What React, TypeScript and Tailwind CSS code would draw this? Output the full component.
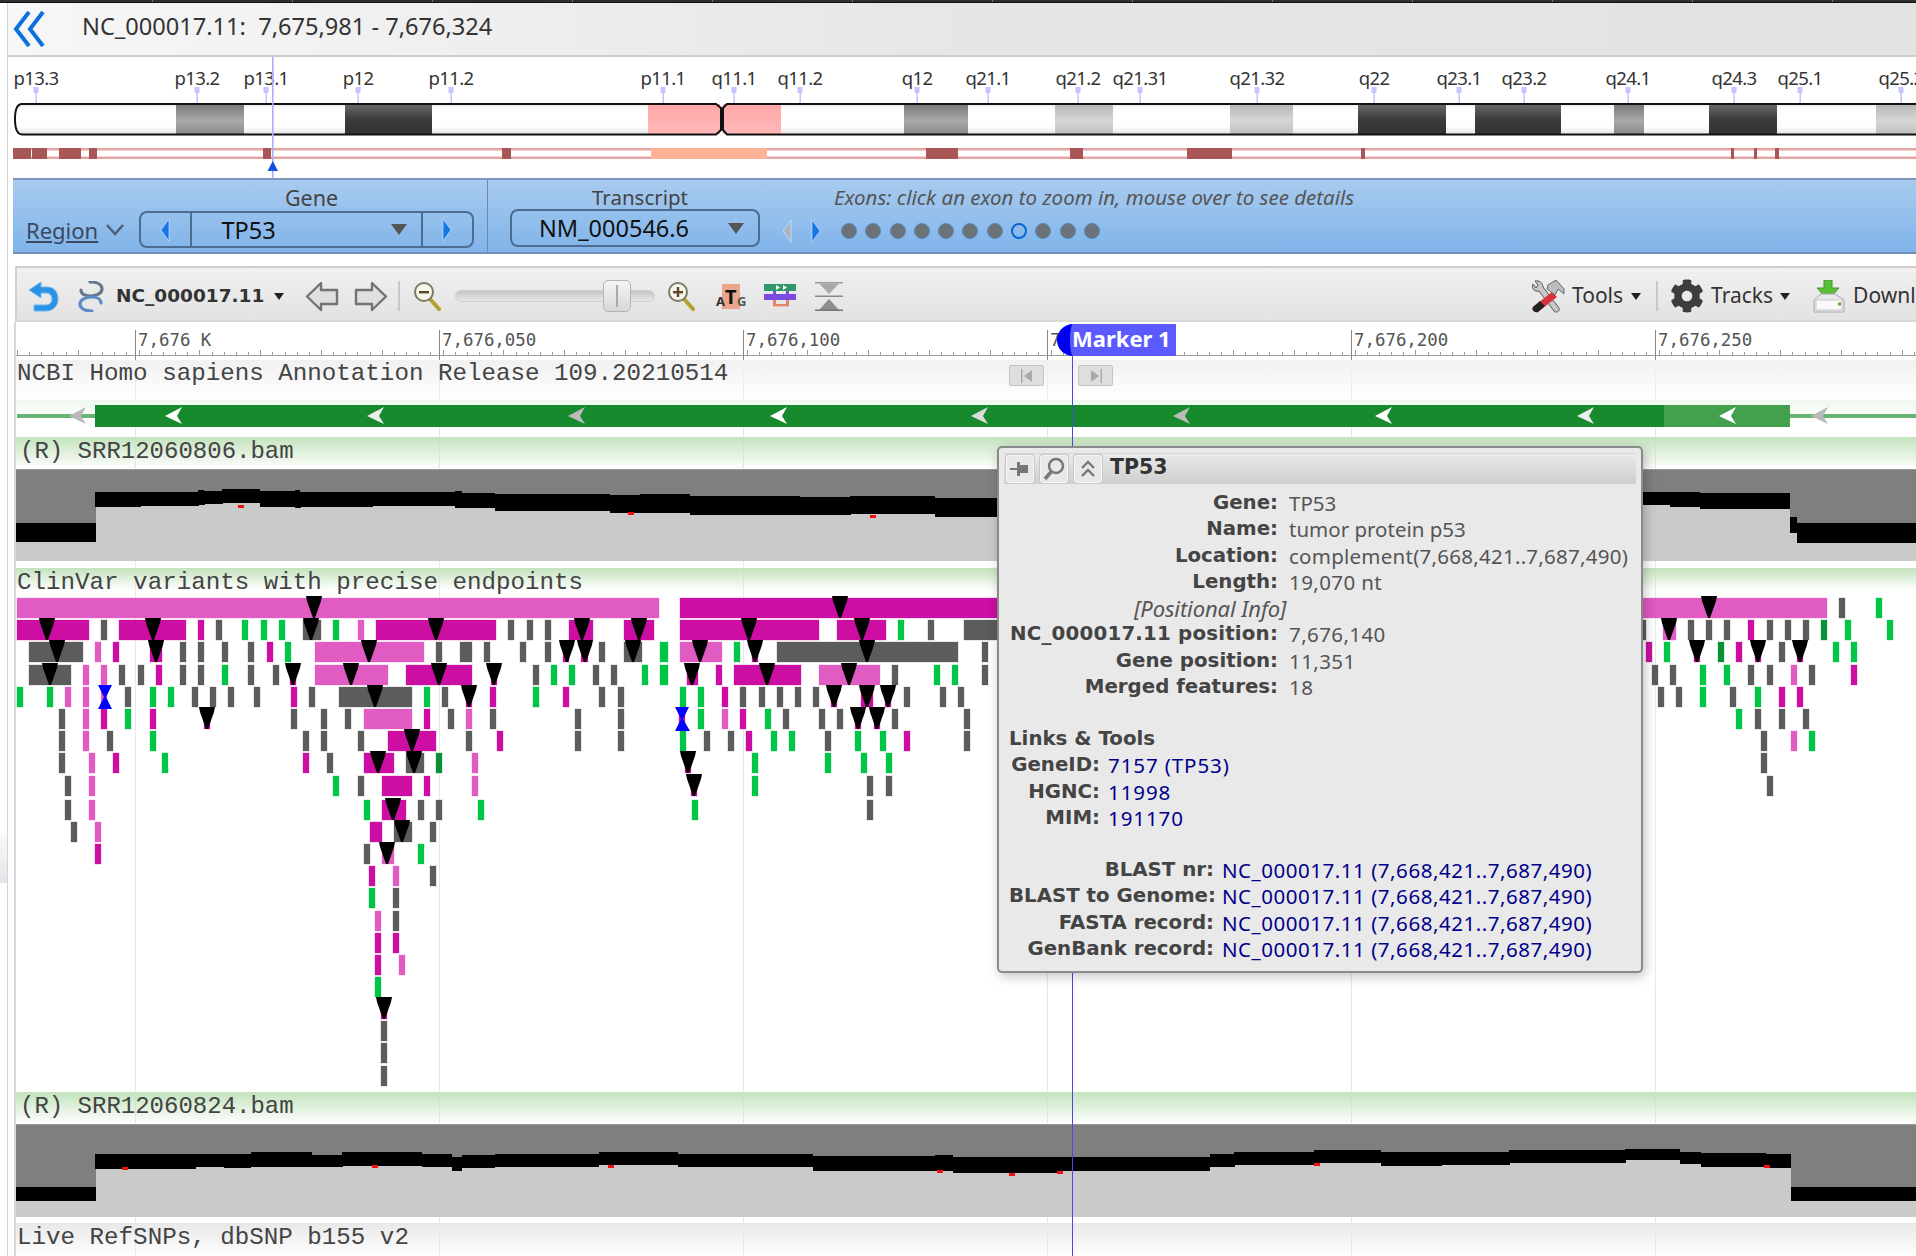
import React from "react";
import { FaCog } from "react-icons/fa";

const ROWS = [598, 620, 642, 665, 687, 709, 731, 753, 776, 800, 822, 844, 866, 888, 911, 933, 955, 977, 999, 1021, 1043, 1066];
const COL: Record<string, string> = { m: "#cc0ea3", p: "#e05cc2", g: "#5c5c5c", n: "#00c547", d: "#0a9138" };

type B = [string, number, number];
const BARS: B[][] = [
  [["p", 17, 659], ["m", 680, 1000], ["p", 1642, 1827], ["g", 1839, 1845], ["n", 1876, 1882]],
  [["m", 17, 89], ["g", 101, 107], ["m", 119, 186], ["m", 198, 204], ["g", 216, 222], ["n", 242, 248], ["n", 261, 267], ["n", 279, 285], ["g", 303, 321], ["n", 333, 339], ["p", 358, 364], ["m", 376, 496], ["g", 508, 514], ["g", 527, 533], ["g", 545, 551], ["m", 569, 593], ["m", 624, 654], ["m", 680, 819], ["m", 837, 886], ["n", 898, 904], ["g", 928, 934], ["g", 964, 1000], ["g", 1642, 1646], ["p", 1663, 1676], ["g", 1688, 1694], ["g", 1706, 1712], ["g", 1724, 1730], ["m", 1748, 1754], ["g", 1767, 1773], ["g", 1785, 1791], ["g", 1803, 1809], ["d", 1821, 1827], ["n", 1845, 1851], ["n", 1887, 1893]],
  [["g", 29, 83], ["p", 95, 101], ["m", 113, 119], ["m", 150, 162], ["g", 180, 186], ["g", 198, 204], ["g", 222, 228], ["g", 248, 254], ["m", 267, 273], ["n", 285, 291], ["p", 315, 424], ["g", 436, 442], ["g", 460, 472], ["g", 484, 490], ["g", 520, 526], ["g", 545, 551], ["m", 563, 569], ["m", 581, 588], ["g", 599, 605], ["g", 624, 642], ["n", 660, 668], ["p", 680, 722], ["n", 734, 740], ["m", 752, 758], ["g", 777, 958], ["g", 982, 988], ["m", 1646, 1652], ["n", 1664, 1670], ["d", 1718, 1724], ["m", 1736, 1742], ["g", 1779, 1785], ["n", 1833, 1839], ["n", 1851, 1857], ["m", 1694, 1700], ["m", 1755, 1761], ["m", 1797, 1803]],
  [["g", 29, 71], ["p", 83, 89], ["p", 101, 107], ["g", 119, 125], ["g", 138, 144], ["m", 156, 162], ["g", 180, 186], ["g", 198, 204], ["n", 222, 228], ["g", 248, 254], ["g", 273, 279], ["m", 290, 296], ["p", 315, 388], ["m", 406, 472], ["m", 491, 497], ["g", 533, 539], ["n", 551, 557], ["n", 569, 575], ["g", 593, 599], ["g", 611, 617], ["n", 642, 648], ["n", 660, 668], ["m", 687, 698], ["m", 716, 722], ["m", 734, 801], ["p", 819, 880], ["g", 892, 898], ["n", 934, 940], ["n", 952, 958], ["g", 982, 988], ["g", 1652, 1658], ["g", 1670, 1676], ["n", 1700, 1706], ["n", 1724, 1730], ["g", 1748, 1754], ["g", 1767, 1773], ["p", 1791, 1797], ["g", 1809, 1815], ["m", 1851, 1857]],
  [["n", 17, 23], ["n", 47, 53], ["p", 65, 71], ["p", 83, 89], ["p", 101, 107], ["g", 125, 131], ["n", 150, 156], ["n", 168, 174], ["g", 192, 198], ["g", 210, 216], ["g", 228, 234], ["g", 254, 260], ["m", 291, 297], ["g", 309, 315], ["g", 339, 412], ["n", 424, 430], ["g", 442, 448], ["m", 466, 472], ["m", 490, 496], ["n", 533, 539], ["m", 563, 569], ["g", 599, 605], ["g", 618, 624], ["n", 680, 686], ["n", 698, 704], ["m", 722, 728], ["g", 740, 746], ["g", 759, 765], ["g", 777, 783], ["g", 795, 801], ["g", 813, 819], ["m", 831, 837], ["m", 861, 873], ["m", 885, 891], ["g", 904, 910], ["g", 940, 946], ["g", 958, 964], ["g", 1658, 1664], ["g", 1676, 1682], ["n", 1700, 1706], ["g", 1730, 1736], ["n", 1755, 1761], ["m", 1779, 1785], ["m", 1797, 1803]],
  [["g", 59, 65], ["p", 83, 89], ["m", 101, 107], ["n", 125, 131], ["m", 150, 156], ["m", 204, 210], ["g", 291, 297], ["g", 321, 327], ["g", 345, 351], ["p", 364, 412], ["m", 424, 430], ["g", 448, 454], ["p", 466, 472], ["g", 490, 496], ["g", 575, 581], ["g", 618, 624], ["m", 679, 685], ["n", 698, 704], ["p", 722, 728], ["m", 740, 746], ["n", 765, 771], ["g", 783, 789], ["g", 819, 825], ["g", 837, 843], ["m", 855, 861], ["m", 874, 880], ["g", 892, 898], ["g", 964, 970], ["n", 1736, 1742], ["g", 1755, 1761], ["g", 1779, 1785], ["g", 1803, 1809]],
  [["g", 59, 65], ["p", 83, 89], ["g", 107, 113], ["n", 150, 156], ["g", 303, 309], ["g", 321, 327], ["g", 358, 364], ["m", 388, 436], ["g", 466, 472], ["m", 497, 503], ["g", 575, 581], ["g", 618, 624], ["n", 680, 686], ["g", 704, 710], ["g", 728, 734], ["m", 746, 752], ["n", 771, 777], ["n", 789, 795], ["g", 825, 831], ["n", 855, 861], ["n", 880, 886], ["m", 904, 910], ["g", 964, 970], ["g", 1761, 1767], ["p", 1791, 1797], ["n", 1809, 1815]],
  [["g", 59, 65], ["p", 89, 95], ["m", 113, 119], ["n", 162, 168], ["m", 303, 309], ["g", 327, 333], ["m", 364, 394], ["g", 406, 424], ["d", 436, 442], ["p", 472, 478], ["m", 685, 691], ["n", 752, 758], ["n", 825, 831], ["n", 861, 867], ["n", 886, 892], ["g", 1761, 1767]],
  [["g", 65, 71], ["p", 89, 95], ["n", 333, 339], ["g", 358, 364], ["m", 382, 412], ["m", 424, 430], ["p", 472, 478], ["m", 691, 697], ["n", 752, 758], ["g", 867, 873], ["g", 886, 892], ["g", 1767, 1773]],
  [["g", 65, 71], ["p", 89, 95], ["n", 364, 370], ["m", 382, 406], ["g", 418, 424], ["g", 436, 442], ["n", 478, 484], ["n", 692, 698], ["g", 867, 873]],
  [["g", 71, 77], ["p", 95, 101], ["m", 370, 382], ["g", 394, 412], ["g", 430, 436]],
  [["m", 95, 101], ["g", 364, 370], ["p", 382, 394], ["n", 418, 424]],
  [["m", 369, 375], ["p", 393, 399], ["g", 430, 436]],
  [["n", 369, 375], ["g", 393, 399]],
  [["p", 375, 381], ["g", 393, 399]],
  [["m", 375, 381], ["m", 393, 399]],
  [["m", 375, 381], ["p", 399, 405]],
  [["n", 375, 381]],
  [["m", 381, 387]],
  [["g", 381, 387]],
  [["g", 381, 387]],
  [["g", 381, 387]],
];
const TRI: [number, number][] = [
  [0, 314], [0, 840], [0, 1709],
  [1, 47], [1, 153], [1, 311], [1, 436], [1, 582], [1, 639], [1, 749], [1, 862], [1, 1669],
  [2, 57], [2, 156], [2, 369], [2, 567], [2, 585], [2, 633], [2, 700], [2, 755], [2, 867], [2, 1697], [2, 1758], [2, 1800],
  [3, 50], [3, 293], [3, 351], [3, 439], [3, 494], [3, 692], [3, 767], [3, 849],
  [4, 375], [4, 469], [4, 834], [4, 867], [4, 888],
  [5, 207], [5, 858], [5, 877],
  [6, 412],
  [7, 378], [7, 414], [7, 688],
  [8, 694],
  [9, 393],
  [10, 402],
  [11, 387],
  [18, 384],
];

const IDEO_LABELS: [string, number][] = [["p13.3", 36], ["p13.2", 197], ["p13.1", 266], ["p12", 358], ["p11.2", 451], ["p11.1", 663], ["q11.1", 734], ["q11.2", 800], ["q12", 917], ["q21.1", 988], ["q21.2", 1078], ["q21.31", 1140], ["q21.32", 1257], ["q22", 1374], ["q23.1", 1459], ["q23.2", 1524], ["q24.1", 1628], ["q24.3", 1734], ["q25.1", 1800], ["q25.2", 1901]];
const BANDS: [number, number, string][] = [[176, 244, "med"], [345, 432, "dark"], [648, 720, "pink"], [723, 781, "pink"], [904, 968, "med"], [1055, 1113, "light"], [1230, 1293, "light"], [1358, 1446, "dark"], [1475, 1561, "dark"], [1614, 1644, "med"], [1709, 1777, "dark"], [1876, 1916, "light"]];
const CYTO: [number, number][] = [[13, 31], [32, 47], [59, 81], [89, 97], [263, 271], [502, 511], [926, 958], [1070, 1083], [1187, 1232], [1361, 1365], [1731, 1734], [1754, 1757], [1775, 1779]];
const MAJORS: [number, string][] = [[135, "7,676 K"], [439, "7,676,050"], [743, "7,676,100"], [1047, "7,676,150"], [1351, "7,676,200"], [1655, "7,676,250"]];
const GENE_ARROWS: [number, string][] = [[78, "#b9b9b9"], [174, "#fff"], [376, "#eee"], [577, "#bbb"], [779, "#fff"], [980, "#ddd"], [1182, "#bbb"], [1384, "#fff"], [1586, "#eee"], [1728, "#fff"], [1820, "#b9b9b9"]];

type Seg = [number, number, number, number];
const COV1: Seg[] = [[16, 95, 523, 542], [95, 140, 492, 507], [140, 198, 492, 506], [198, 204, 490, 505], [204, 222, 491, 504], [222, 260, 489, 503], [260, 295, 491, 507], [295, 300, 490, 508], [300, 372, 492, 507], [372, 455, 492, 506], [455, 462, 491, 508], [462, 495, 493, 508], [495, 560, 494, 511], [560, 610, 494, 511], [610, 640, 495, 513], [640, 690, 494, 513], [690, 800, 496, 515], [800, 850, 497, 515], [850, 935, 496, 514], [935, 1000, 498, 517], [1000, 1642, 496, 515], [1642, 1670, 492, 505], [1670, 1700, 492, 507], [1700, 1790, 493, 509], [1790, 1797, 517, 533], [1797, 1916, 523, 543]];
const RAW2: [number, number, number, number][] = [[13, 78, 380, 423], [78, 160, 283, 328], [160, 183, 283, 322], [183, 205, 283, 325], [205, 255, 277, 320], [255, 280, 285, 320], [280, 345, 277, 318], [345, 370, 283, 322], [370, 378, 290, 333], [378, 405, 285, 325], [405, 490, 283, 320], [490, 555, 277, 316], [555, 630, 283, 322], [630, 665, 283, 322], [665, 765, 289, 332], [765, 780, 285, 332], [780, 865, 292, 340], [865, 990, 290, 332], [990, 1010, 283, 322], [1010, 1075, 277, 314], [1075, 1130, 270, 310], [1130, 1180, 277, 318], [1180, 1235, 277, 316], [1235, 1330, 271, 308], [1330, 1375, 268, 301], [1375, 1392, 277, 312], [1392, 1445, 279, 320], [1445, 1466, 283, 325], [1466, 1568, 380, 423]];
const COV2: Seg[] = RAW2.map(([a, b, t, u]) => [a * 1.222, b * 1.222, 1060 + t / 3, 1060 + u / 3] as Seg);
const RED1: [number, number][] = [[238, 505], [628, 512], [870, 515], [1000, 0]];
const RED2: [number, number][] = [[122, 1167], [372, 1165], [608, 1165], [937, 1170], [1009, 1173], [1057, 1171], [1314, 1163], [1764, 1165]];

const sans = "font-['Noto_Sans','Liberation_Sans',sans-serif]";
const mono = "font-['Liberation_Mono',monospace]";
const boldFace = "font-['DejaVu_Sans',sans-serif] font-bold";

function Coverage({ segs, top, h, reds }: { segs: Seg[]; top: number; h: number; reds: [number, number][] }) {
  return (
    <svg className="block w-[1900px]" height={h} viewBox={`16 ${top} 1900 ${h}`} shapeRendering="crispEdges">
      <rect x="16" y={top} width="1900" height={h} fill="#cacaca" />
      {segs.map(([a, b, t, u], i) => (
        <g key={i}>
          <rect x={a} y={top} width={b - a + 0.5} height={t - top} fill="#7f7f7f" />
          <rect x={a} y={t} width={b - a + 0.5} height={u - t} fill="#000" />
        </g>
      ))}
      <rect x="16" y={top} width="1900" height="1" fill="#9a9a9a" />
      {reds.filter((r) => r[1] > 0).map(([x, y], i) => <rect key={i} x={x} y={y} width="6" height="2.5" fill="#f01010" />)}
    </svg>
  );
}

function GeneArrow({ x, c }: { x: number; c: string }) {
  return <polygon points={`${x - 9},416 ${x + 8},407 ${x + 3},416 ${x + 8},424`} fill={c} />;
}

function Ideogram() {
  return (
    <svg className="block" width="1908" height="121" viewBox="8 57 1908 121">
      <defs>
        <linearGradient id="w" x1="0" y1="0" x2="0" y2="1"><stop offset="0" stopColor="#eee" /><stop offset="0.2" stopColor="#fff" /><stop offset="0.75" stopColor="#fff" /><stop offset="1" stopColor="#e4e4e4" /></linearGradient>
        <linearGradient id="med" x1="0" y1="0" x2="0" y2="1"><stop offset="0" stopColor="#777" /><stop offset="0.55" stopColor="#a9a9a9" /><stop offset="1" stopColor="#8a8a8a" /></linearGradient>
        <linearGradient id="dark" x1="0" y1="0" x2="0" y2="1"><stop offset="0" stopColor="#6a6a6a" /><stop offset="0.5" stopColor="#3c3c3c" /><stop offset="1" stopColor="#333" /></linearGradient>
        <linearGradient id="light" x1="0" y1="0" x2="0" y2="1"><stop offset="0" stopColor="#b4b4b4" /><stop offset="0.55" stopColor="#d6d6d6" /><stop offset="1" stopColor="#c0c0c0" /></linearGradient>
        <linearGradient id="pink" x1="0" y1="0" x2="0" y2="1"><stop offset="0" stopColor="#ffa6a6" /><stop offset="1" stopColor="#ffb8b8" /></linearGradient>
      </defs>
      {IDEO_LABELS.map(([t, x]) => (
        <g key={t}>
          <rect x={x - 2.5} y="87" width="5" height="6" fill="#c4c4ff" />
          <rect x={x - 0.5} y="93" width="1.5" height="10" fill="#c4c4ff" />
          <text x={x} y="85" textAnchor="middle" fontFamily="Noto Sans" fontSize="18.5" letterSpacing="-0.6" fill="#333">{t}</text>
        </g>
      ))}
      <path d="M 22 104 H 716 Q 720 104 720 108 V 130 Q 720 134 716 134 H 22 Q 15 134 15 119 Q 15 104 22 104 Z" fill="url(#w)" />
      <path d="M 727 104 H 1920 V 134 H 727 Q 723 134 723 119 Q 723 104 727 104 Z" fill="url(#w)" />
      {BANDS.map(([a, b, k], i) => <rect key={i} x={a} y="104" width={b - a} height="30" fill={`url(#${k})`} />)}
      <path d="M 22 104 H 716 L 721 108 V 130 L 716 134.5 H 22 Q 15 134 15 119 Q 15 104 22 104 Z" fill="none" stroke="#111" strokeWidth="2" />
      <path d="M 1920 104 H 727 L 723 108 V 130 L 727 134.5 H 1920" fill="none" stroke="#111" strokeWidth="2" />
      <rect x="13" y="148" width="1903" height="11" fill="#e5a5a5" />
      <rect x="13" y="150.5" width="1903" height="6" fill="#fff" />
      <rect x="651" y="148" width="116" height="11" fill="#ffb295" />
      {CYTO.map(([a, b], i) => <rect key={i} x={a} y="148" width={b - a} height="11" fill="#a95656" />)}
      <rect x="272" y="57" width="1.6" height="121" fill="#aeaeff" />
      <polygon points="272.8,161 278,171 267.5,171" fill="#1450e0" />
    </svg>
  );
}

function Tri({ d, c = "#1577e6" }: { d: "l" | "r"; c?: string }) {
  return (
    <svg width="10" height="24" viewBox="0 0 10 24">
      <polygon points={d === "l" ? "9,1 9,23 1,12" : "1,1 1,23 9,12"} fill={c} stroke="#d8ecff" strokeWidth="0.6" />
    </svg>
  );
}

function Caret({ w = 16, h = 11, c = "#555" }: { w?: number; h?: number; c?: string }) {
  return <svg width={w} height={h} viewBox="0 0 16 11"><polygon points="0,0 16,0 8,11" fill={c} /></svg>;
}

function Undo() {
  return (
    <svg width="31" height="31" viewBox="0 0 31 31">
      <path d="M1 9 L13 1 V6 H19 C27 6 30 12 30 18 C30 25 25 30 18 30 H6 V24 H18 C22 24 24 21 24 18 C24 15 22 12 18 12 H13 V17 Z" fill="#2a93e6" stroke="#6fb7ee" strokeWidth="1" />
    </svg>
  );
}
function LinkIcon() {
  return (
    <svg width="28" height="31" viewBox="0 0 28 31" fill="none" strokeLinecap="round">
      <path d="M13 1 C21 1 25 4 25 8 C25 13 18 15 13 15 C8 15 4 13 4 9" stroke="#66788e" strokeWidth="3.2" />
      <path d="M15 30 C7 30 3 27 3 23 C3 18 10 16 15 16 C20 16 24 18 24 22" stroke="#5c8cc6" strokeWidth="3.2" />
    </svg>
  );
}
function BigArrow({ d }: { d: "l" | "r" }) {
  return (
    <svg width="34" height="31" viewBox="0 0 34 31" className={d === "r" ? "-scale-x-100" : ""}>
      <polygon points="2,15.5 16,2 16,9 32,9 32,23 16,23 16,29" fill="#dfdfdf" stroke="#737373" strokeWidth="2.4" strokeLinejoin="round" />
    </svg>
  );
}
function Mag({ plus }: { plus?: boolean }) {
  return (
    <svg width="28" height="30" viewBox="0 0 28 30" fill="none">
      <line x1="17" y1="18" x2="26" y2="28" stroke="#b3a22d" strokeWidth="4" strokeLinecap="round" />
      <circle cx="11" cy="11" r="9" fill="#f6f6ea" stroke="#7c7c66" strokeWidth="2" />
      <rect x="6" y="10" width="10" height="2.4" fill="#5c4a2a" />
      {plus && <rect x="9.8" y="6" width="2.4" height="10" fill="#5c4a2a" />}
    </svg>
  );
}
function Atg() {
  return (
    <svg width="32" height="25" viewBox="0 0 32 25" className="mt-[1px]">
      <rect x="7" y="0" width="18" height="25" fill="#e9a68b" />
      <text x="1" y="22" fontFamily="Noto Sans" fontSize="13" fontWeight="700" fill="#333">A</text>
      <text x="10" y="20" fontFamily="Noto Sans" fontSize="20" fontWeight="700" fill="#111">T</text>
      <text x="22" y="22" fontFamily="Noto Sans" fontSize="13" fontWeight="700" fill="#555">G</text>
    </svg>
  );
}
function Rows() {
  return (
    <svg width="32" height="25" viewBox="0 0 32 25">
      <rect x="0" y="0" width="32" height="7" fill="#2e9a6a" />
      <polygon points="12,1 16,3.5 12,6" fill="#fff" />
      <polygon points="19,1 23,3.5 19,6" fill="#fff" />
      <rect x="0" y="10" width="32" height="6" fill="#7a4ce0" />
      <rect x="9" y="7" width="3" height="3" fill="#7a4ce0" />
      <rect x="22" y="7" width="3" height="3" fill="#7a4ce0" />
      <rect x="9" y="16" width="3" height="6" fill="#e8836b" />
      <rect x="22" y="16" width="3" height="6" fill="#e8836b" />
      <rect x="9" y="20" width="16" height="2.4" fill="#e8836b" />
    </svg>
  );
}
function Collapse() {
  return (
    <svg width="28" height="29" viewBox="0 0 28 29">
      <rect x="0" y="0" width="28" height="1.5" fill="#9a9a9a" />
      <polygon points="4,1.5 24,1.5 14,12" fill="#a8a8a8" />
      <rect x="0" y="13.5" width="28" height="1.5" fill="#8a8a8a" />
      <polygon points="14,17 24,28 4,28" fill="#8d8d8d" />
      <rect x="0" y="27.5" width="28" height="1.5" fill="#777" />
    </svg>
  );
}
function Hammer() {
  return (
    <svg width="35" height="33" viewBox="0 0 35 33">
      <path d="M3 4 C1 9 5 12 9 11 L24 31 C26 33 30 32 29 28 L13 7 C13 3 9 0 5 1 L8 5 L6 8 Z" fill="#c8c8c8" stroke="#555" strokeWidth="1" />
      <path d="M22 12 L27 17 L8 32 C5 33 1 30 3 27 Z" fill="#d8333a" />
      <path d="M8 32 C5 33 1 30 3 27 L10 21 L15 26 Z" fill="#222" />
      <path d="M18 5 L26 0 L34 9 L34 14 L28 9 L25 15 L17 9 Z" fill="#bdbdbd" stroke="#666" strokeWidth="1" />
    </svg>
  );
}
function Download() {
  return (
    <svg width="32" height="33" viewBox="0 0 32 33">
      <polygon points="11,0 19,0 19,8 26,8 15,20 4,8 11,8" fill="#5bbf3a" stroke="#3c9a25" strokeWidth="1" />
      <polygon points="1,20 8,14 22,14 31,20 31,32 1,32" fill="#e9e9e9" stroke="#a8a8a8" strokeWidth="1" />
      <rect x="3" y="20" width="26" height="10" fill="#fafafa" stroke="#bcbcbc" strokeWidth="0.8" />
      <rect x="25" y="22.5" width="3" height="3" fill="#4faf2d" />
    </svg>
  );
}
function PopBtn({ children }: { children: React.ReactNode }) {
  return <div className="w-[28px] h-[28px] rounded-[3px] bg-[#e8e8e8] border border-[#f6f6f6] shadow-[0_0_0_1px_#c8c8c8] flex items-center justify-center">{children}</div>;
}
function TrackBtn({ d }: { d: "l" | "r" }) {
  return (
    <div className="w-[35px] h-[21px] rounded-[2px] bg-[#dedede] border border-[#c4c4c4] flex items-center justify-center">
      <svg width="16" height="14" viewBox="0 0 16 14">
        {d === "l" ? <><rect x="2" y="0" width="1.5" height="14" fill="#aaa" /><polygon points="13,1 13,13 5,7" fill="#aaa" /></> : <><rect x="12.5" y="0" width="1.5" height="14" fill="#aaa" /><polygon points="3,1 3,13 11,7" fill="#aaa" /></>}
      </svg>
    </div>
  );
}

const TABLE1: [string, string, string][] = [["Gene:", "TP53", ""], ["Name:", "tumor protein p53", ""], ["Location:", "complement(7,668,421..7,687,490)", "tracking-[0.25px]"], ["Length:", "19,070 nt", "tracking-[0.4px]"]];
const TABLE1B: [string, string][] = [["NC_000017.11 position:", "7,676,140"], ["Gene position:", "11,351"], ["Merged features:", "18"]];
const TABLE2: [string, string][] = [["GeneID:", "7157 (TP53)"], ["HGNC:", "11998"], ["MIM:", "191170"]];
const TABLE3 = ["BLAST nr:", "BLAST to Genome:", "FASTA record:", "GenBank record:"];
const label = `text-right ${boldFace} text-[19.8px] text-[#444] whitespace-nowrap`;

function Popup() {
  return (
    <div className={`absolute left-[997px] top-[446px] w-[646px] h-[527px] z-30 bg-[#e9e9e9] border-2 border-[#8a8a8a] rounded-[5px] shadow-[2px_3px_12px_rgba(0,0,0,0.25)] p-[5px] ${sans} text-[20.5px] leading-[26.25px] text-[#555]`}>
      <div className="h-[31px] flex items-center gap-[6px] pl-[2px] bg-gradient-to-b from-[#e9e9e9] to-[#cfcfcf] border-t border-[#d5d5d5]">
        <PopBtn>
          <svg width="20" height="16" viewBox="0 0 20 16"><rect x="0" y="7" width="8" height="2" fill="#777" /><rect x="7" y="1" width="3" height="14" fill="#777" /><rect x="9" y="4" width="9" height="8" fill="#777" /></svg>
        </PopBtn>
        <PopBtn>
          <svg width="22" height="24" viewBox="0 0 22 24" fill="none"><circle cx="13" cy="9" r="7" stroke="#777" strokeWidth="2.5" /><line x1="8" y1="15" x2="2" y2="22" stroke="#777" strokeWidth="3.5" /></svg>
        </PopBtn>
        <PopBtn>
          <svg width="16" height="20" viewBox="0 0 16 20" fill="none" stroke="#777" strokeWidth="2.4"><polyline points="2,9 8,3 14,9" /><polyline points="2,17 8,11 14,17" /></svg>
        </PopBtn>
        <span className={`ml-[2px] pb-[3px] ${boldFace} text-[#333] text-[20.5px]`}>TP53</span>
      </div>
      <div className="mt-[6px] pl-[5px] grid grid-cols-[269px_1fr] gap-x-[11px]">
        {TABLE1.map(([a, b, t]) => (<React.Fragment key={a}><span className={label}>{a}</span><span className={`whitespace-nowrap ${t}`}>{b}</span></React.Fragment>))}
        <span className="col-span-2 pl-[125px] italic text-[22px] tracking-[-0.1px]">[Positional Info]</span>
        {TABLE1B.map(([a, b], i) => (<React.Fragment key={a}><span className={`${label} ${i === 0 ? "tracking-[0.2px]" : ""}`}>{a}</span><span className="tracking-[0.4px]">{b}</span></React.Fragment>))}
      </div>
      <div className={`mt-[26px] pl-[5px] ${boldFace} text-[19.8px] text-[#444]`}>Links &amp; Tools</div>
      <div className="pl-[5px] grid grid-cols-[91px_1fr] gap-x-[8px]">
        {TABLE2.map(([a, b]) => (<React.Fragment key={a}><span className={label}>{a}</span><span className="text-[#00008b] tracking-[0.9px]">{b}</span></React.Fragment>))}
      </div>
      <div className="mt-[26px] pl-[5px] grid grid-cols-[205px_1fr] gap-x-[8px]">
        {TABLE3.map((a) => (<React.Fragment key={a}><span className={label}>{a}</span><span className="text-[#00008b] whitespace-nowrap tracking-[0.53px]">NC_000017.11 (7,668,421..7,687,490)</span></React.Fragment>))}
      </div>
    </div>
  );
}

export default function App() {
  const ticks: number[] = [];
  for (let x = 17; x < 1916; x += 12.16) ticks.push(x);
  return (
    <div className="relative w-[1916px] h-[1256px] overflow-hidden bg-white flex flex-col">
      <div className="h-[3px] shrink-0 bg-[#2e2e2e] flex border-b border-[#111]">
        <div className="w-[153px] border-r border-[#777]" />
        {Array.from({ length: 12 }).map((_, i) => <div key={i} className="w-[140px] border-r border-[#777]" />)}
      </div>
      <div className="flex flex-1 min-h-0">
        <div className="w-[8px] shrink-0 flex flex-col border-r border-[#d4d4d4]">
          <div className="h-[828px]" />
          <div className="h-[52px] bg-gradient-to-b from-[#fbfbfb] to-[#e2e5ea]" />
        </div>
        <div className="flex-1 min-w-0 flex flex-col">
          {/* header */}
          <div className={`h-[54px] shrink-0 flex items-center pl-[5px] bg-gradient-to-r from-[#f7f7f7] via-[#e6e6e6] to-[#e3e3e3] border-b-2 border-[#cdcdcd] ${sans}`}>
            <svg width="32" height="36" viewBox="0 0 32 36" fill="none" stroke="#0a70e0" strokeWidth="4"><polyline points="16,1 3,18 16,35" /><polyline points="30,1 17,18 30,35" /></svg>
            <span className="ml-[37px] pb-[5px] text-[23.6px] text-[#333] whitespace-pre">NC_000017.11:  7,675,981 - 7,676,324</span>
          </div>
          <Ideogram />
          {/* blue panel */}
          <div className={`h-[76px] shrink-0 ml-[5px] flex bg-gradient-to-b from-[#a8cbef] to-[#80b4ea] border-t-2 border-b-2 border-t-[#7c98c0] border-b-[#7090b8] text-[#444] ${sans}`}>
            <div className="w-[475px] shrink-0 flex border-r border-[#6a8ab0] pl-[13px]">
              <div className="w-[114px] pt-[34px] flex items-start">
                <span className="text-[22px] leading-[32px] underline text-[#3c4860]">Region</span>
                <svg className="ml-[8px] mt-[10px]" width="18" height="12" viewBox="0 0 18 12" fill="none" stroke="#4e5d70" strokeWidth="2.4"><polyline points="1,1 9,10 17,1" /></svg>
              </div>
              <div className="w-[333px] flex flex-col items-center">
                <span className="text-[21.5px] leading-[26px] pt-[5px] h-[31px] pl-[10px] text-[#444]">Gene</span>
                <div className="w-[335px] -ml-[1px] h-[37px] flex items-center border-2 border-[#4c6c90] rounded-[8px]">
                  <div className="w-[51px] h-full flex items-center justify-center border-r-2 border-[#4c6c90]"><Tri d="l" /></div>
                  <div className="w-[231px] h-full flex items-center border-r-2 border-[#4c6c90] pl-[30px] pr-[14px] justify-between text-[23.5px] text-[#111]">
                    <span className="pt-[2px]">TP53</span><Caret />
                  </div>
                  <div className="flex-1 flex items-center justify-center"><Tri d="r" /></div>
                </div>
              </div>
            </div>
            <div className="ml-[23px] w-[248px] shrink-0 flex flex-col items-center">
              <span className="text-[20.5px] leading-[26px] pt-[4px] pl-[10px] h-[29px] text-[#444]">Transcript</span>
              <div className="w-[250px] h-[38px] flex items-center justify-between border-2 border-[#4c6c90] rounded-[8px] pl-[27px] pr-[14px] text-[23.5px] text-[#111] shrink-0">
                <span className="pt-[2px]">NM_000546.6</span><Caret />
              </div>
            </div>
            <div className="ml-[23px] flex flex-col">
              <span className="ml-[52px] pt-[4px] h-[37px] italic text-[20.5px] leading-[26px] text-[#555] whitespace-nowrap">Exons: click an exon to zoom in, mouse over to see details</span>
              <div className="flex items-center pt-[2px]">
                <Tri d="l" c="#a7b5c5" />
                <span className="ml-[19px]"><Tri d="r" /></span>
                <div className="ml-[20px] flex gap-[8.3px]">
                  {[0, 1, 2, 3, 4, 5, 6, 7, 8, 9, 10].map((i) => (
                    <div key={i} className={i === 7 ? "w-[16px] h-[16px] rounded-full border-[2.5px] border-[#0a66cc]" : "w-[16px] h-[16px] rounded-full bg-[#6c7278] border border-[#5588b8]"} />
                  ))}
                </div>
              </div>
            </div>
          </div>
          {/* toolbar */}
          <div className={`mt-[12px] ml-[7px] h-[56px] shrink-0 flex items-center pt-[4px] bg-gradient-to-b from-[#f0f0f0] to-[#e3e3e3] border-t-2 border-l-2 border-t-[#d4cccc] border-l-[#d0d0d0] border-b-2 border-b-[#d8d8d8] ${sans} text-[#333] [&>*]:shrink-0`}>
            <div className="ml-[11px] w-[49px]"><Undo /></div>
            <LinkIcon />
            <span className={`ml-[11px] ${boldFace} text-[18.5px] text-[#333] whitespace-nowrap w-[158px]`}>NC_000017.11</span>
            <Caret w={10} h={7} c="#222" />
            <div className="ml-[21px]"><BigArrow d="l" /></div>
            <div className="ml-[15px]"><BigArrow d="r" /></div>
            <div className="ml-[10px] w-[2px] h-[30px] bg-[#c8c8c8]" />
            <div className="ml-[13px]"><Mag /></div>
            <div className="ml-[14px] relative w-[200px] h-[12px] rounded-full bg-gradient-to-b from-[#c4c4c4] to-[#e8e8e8] border border-[#cfcfcf]">
              <div className="absolute left-[147px] top-[-11px] w-[28px] h-[32px] rounded-[5px] bg-gradient-to-b from-[#f4f4f4] to-[#d8d8d8] border border-[#b5b5b5] flex justify-center"><div className="w-[2px] h-[22px] mt-[4px] bg-[#aaa]" /></div>
            </div>
            <div className="ml-[12px]"><Mag plus /></div>
            <div className="ml-[20px]"><Atg /></div>
            <div className="ml-[17px]"><Rows /></div>
            <div className="ml-[19px]"><Collapse /></div>
            <div className="ml-[687px]"><Hammer /></div>
            <span className="ml-[7px] text-[21px] whitespace-nowrap">Tools</span>
            <div className="ml-[8px]"><Caret w={10} h={7} c="#222" /></div>
            <div className="ml-[15px] w-[2px] h-[30px] bg-[#c8c8c8]" />
            <FaCog className="ml-[12px]" size={34} color="#3d3d3d" />
            <span className="ml-[7px] text-[21px] whitespace-nowrap">Tracks</span>
            <div className="ml-[7px]"><Caret w={10} h={7} c="#222" /></div>
            <div className="ml-[23px]"><Download /></div>
            <span className="ml-[8px] text-[21px] whitespace-nowrap">Download</span>
          </div>
          {/* viewer */}
          <div className="relative flex-1 min-h-0 ml-[6px] flex flex-col border-l-2 border-[#d8d8d8]">
            <div className="h-[38px] shrink-0">
              <svg className="block" width="1900" height="38" viewBox="16 322 1900 38" shapeRendering="crispEdges">
                <rect x="16" y="355" width="1900" height="1" fill="#999" />
                {ticks.map((x, i) => <rect key={i} x={Math.round(x)} y={i % 5 === 0 ? 350 : 352} width="1" height={i % 5 === 0 ? 5 : 3} fill="#999" />)}
                {MAJORS.map(([x, t]) => (
                  <g key={x}>
                    <rect x={x} y="330" width="1" height="30" fill="#888" />
                    <text x={x + 3} y="346" fontFamily="DejaVu Sans Mono" fontSize="17.4" fill="#555" shapeRendering="auto">{t}</text>
                  </g>
                ))}
              </svg>
            </div>
            <div className="absolute left-0 top-[38px] right-0 bottom-0 z-0 flex pl-[119px]">
              {[0, 1, 2, 3, 4, 5].map((i) => <div key={i} className="w-[304px] shrink-0 border-l border-[#e8e8e8]" />)}
            </div>
            <div className="relative z-10 flex flex-col flex-1 min-h-0">
              <div className={`h-[40px] shrink-0 flex items-start bg-gradient-to-b from-[#f1f1f1] to-transparent ${mono} text-[24.2px] text-[#444]`}>
                <span className="pl-[1px] pt-[1px] leading-[26px] whitespace-nowrap w-[993px]">NCBI Homo sapiens Annotation Release 109.20210514</span>
                <div className="mt-[5px]"><TrackBtn d="l" /></div>
                <div className="mt-[5px] ml-[34px]"><TrackBtn d="r" /></div>
              </div>
              <div className="h-[37px] shrink-0 bg-gradient-to-b from-[#eef8ee] via-transparent to-transparent">
                <svg className="block" width="1900" height="37" viewBox="16 400 1900 37">
                  <rect x="17" y="414" width="78" height="4" fill="#66b572" />
                  <rect x="1790" y="414" width="130" height="4" fill="#66b572" />
                  <rect x="95" y="405" width="1569" height="22" fill="#168a2c" />
                  <rect x="1664" y="405" width="126" height="22" fill="#43a04c" />
                  {GENE_ARROWS.map(([x, c]) => <GeneArrow key={x} x={x} c={c} />)}
                </svg>
              </div>
              <div className={`h-[32px] shrink-0 bg-gradient-to-b from-[#c3e3bd] to-transparent ${mono} text-[24px] text-[#444] pl-[4px] leading-[30px]`}>(R) SRR12060806.bam</div>
              <Coverage segs={COV1} top={469} h={92} reds={RED1} />
              <div className="h-[7px] shrink-0" />
              <div className={`h-[22px] shrink-0 bg-gradient-to-b from-[#c3e3bd] to-transparent ${mono} text-[24.2px] text-[#444] pl-[1px] leading-[30px] whitespace-nowrap`}>ClinVar variants with precise endpoints</div>
              <svg className="block shrink-0 relative" width="1900" height="502" viewBox="16 590 1900 502">
                {BARS.map((row, i) => row.map(([c, a, b], j) => (
                  <rect key={`${i}-${j}`} x={a} y={ROWS[i]} width={b - a} height="20" fill={COL[c]} stroke={COL[c]} strokeOpacity="0.3" strokeWidth="1" />
                )))}
                <polygon points="98,685 112,685 106,697 112,709 98,709 104,697" fill="#0000ff" />
                <polygon points="675,707 689,707 683,719 690,731 675,731 681,719" fill="#0000ff" />
                {TRI.map(([r, x], i) => {
                  const y = ROWS[r] - 2;
                  return <polygon key={i} points={`${x - 8},${y} ${x + 8},${y} ${x + 7},${y + 5} ${x + 1},${y + 22} ${x - 1},${y + 22} ${x - 7},${y + 5}`} fill="#000" />;
                })}
              </svg>
              <div className={`h-[32px] shrink-0 bg-gradient-to-b from-[#c3e3bd] to-transparent ${mono} text-[24px] text-[#444] pl-[4px] leading-[30px]`}>(R) SRR12060824.bam</div>
              <Coverage segs={COV2} top={1124} h={93} reds={RED2} />
              <div className="h-[6px] shrink-0" />
              <div className={`flex-1 bg-gradient-to-b from-[#e8e8e8] to-transparent ${mono} text-[24.2px] text-[#444] pl-[1px] pt-[1px] leading-[28px] whitespace-nowrap`}>Live RefSNPs, dbSNP b155 v2</div>
            </div>
          </div>
        </div>
      </div>
      {/* marker */}
      <div className="absolute left-[1072px] top-[356px] bottom-0 w-px bg-[#4a4ae0] z-20" />
      <div className={`absolute left-[1057px] top-[324px] h-[32px] w-[119px] z-20 flex items-center pl-[15px] pb-[3px] bg-[#5a5aff] rounded-l-[16px] border-l-[13px] border-l-[#0000f0] ${sans} font-bold text-[22px] text-white whitespace-nowrap`}>
        <span className="-ml-[15px] pl-[2px]">Marker 1</span>
      </div>
      <Popup />
    </div>
  );
}
